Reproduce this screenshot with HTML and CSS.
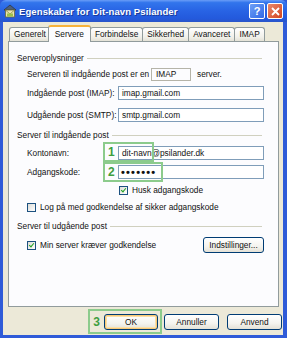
FILE: index.html
```html
<!DOCTYPE html>
<html lang="da">
<head>
    <meta charset="UTF-8">
    <title>Egenskaber for Dit-navn Psilander</title>
    <link rel="stylesheet" href="styles.css">
</head>
<body>
<div class="window">
    <div class="titlebar">
        <svg class="app-icon" width="14" height="14" viewBox="0 0 14 14">
            <path d="M1 6 L7 1 L13 6 Z" fill="#4d5f7a" stroke="#2b3646" stroke-width="0.8"/>
            <rect x="2.5" y="6" width="9" height="7" fill="#e8e4b0" stroke="#6b6a3a" stroke-width="0.8"/>
            <path d="M2.5 6 L7 10 L11.5 6" fill="none" stroke="#8a8840" stroke-width="0.8"/>
            <rect x="4" y="9.5" width="6" height="3" fill="#9cc04a"/>
        </svg>
        <span class="title">Egenskaber for Dit-navn Psilander</span>
        <span class="tb-btn help">?</span>
        <span class="tb-btn close">
            <svg width="9" height="9" viewBox="0 0 9 9"><path d="M1 1 L8 8 M8 1 L1 8" stroke="#fff" stroke-width="1.8"/></svg>
        </span>
    </div>
    <div class="frame">
        <div class="tabs">
            <span class="tab">Generelt</span>
            <span class="tab active">Servere</span>
            <span class="tab">Forbindelse</span>
            <span class="tab">Sikkerhed</span>
            <span class="tab">Avanceret</span>
            <span class="tab">IMAP</span>
        </div>
        <div class="panel">
            <div class="group-title">Serveroplysninger</div>
            <div class="row first">
                <span class="intro">Serveren til indgående post er en</span>
                <span class="readonly">IMAP</span>
                <span class="after">server.</span>
            </div>
            <div class="row r-gap5">
                <label class="lbl">Indgående post (IMAP):</label>
                <span class="field">imap.gmail.com</span>
            </div>
            <div class="row r-gap8">
                <label class="lbl">Udgående post (SMTP):</label>
                <span class="field">smtp.gmail.com</span>
            </div>

            <div class="group-title g2">Server til indgående post</div>
            <div class="row r-gap6">
                <label class="lbl">Kontonavn:</label>
                <span class="field">dit-navn@psilander.dk</span>
                <span class="mark mark1"><b>1</b></span>
            </div>
            <div class="row r-gap5">
                <label class="lbl">Adgangskode:</label>
                <span class="field dots">•••••••</span>
                <span class="mark mark2"><b>2</b></span>
            </div>
            <div class="row check-row husk">
                <span class="cb checked"></span>
                <span>Husk adgangskode</span>
            </div>
            <div class="row check-row log">
                <span class="cb"></span>
                <span>Log på med godkendelse af sikker adgangskode</span>
            </div>

            <div class="group-title g3">Server til udgående post</div>
            <div class="row tall">
                <span class="cb checked"></span>
                <span class="cb-text">Min server kræver godkendelse</span>
                <button class="btn settings">Indstillinger...</button>
            </div>
        </div>
        <div class="buttons">
            <div class="mark3">
                <b>3</b>
                <button class="btn default">OK</button>
            </div>
            <button class="btn">Annuller</button>
            <button class="btn">Anvend</button>
        </div>
    </div>
</div>
</body>
</html>
```

FILE: styles.css
```css
body {
    margin: 0;
    font-family: "Liberation Sans", Arial, sans-serif;
    font-size: 8.3px;
    color: #111;
}
.window {
    width: 287px;
    height: 338px;
    display: flex;
    flex-direction: column;
    background: #2f5bd8;
}
.titlebar {
    height: 22px;
    display: flex;
    align-items: center;
    padding: 0 3px 0 3px;
    box-sizing: border-box;
    background: linear-gradient(#6a9df7 0%, #3275ec 12%, #2863e4 50%, #2359dc 85%, #2a55c8 100%);
    border-radius: 6px 6px 0 0;
}
.app-icon {
    flex: 0 0 14px;
}
.title {
    margin-left: 2px;
    color: #fff;
    font-weight: bold;
    font-size: 9.5px;
    letter-spacing: 0.1px;
    text-shadow: 1px 1px 0 #1a3b9a;
    flex: 1;
}
.tb-btn {
    width: 16px;
    height: 16px;
    box-sizing: border-box;
    border: 1px solid #fff;
    border-radius: 2px;
    display: flex;
    align-items: center;
    justify-content: center;
    color: #fff;
    font-weight: bold;
    font-size: 11px;
}
.help {
    background: linear-gradient(135deg, #6fa0f6, #2f68e6);
    margin-right: 2px;
}
.close {
    background: linear-gradient(135deg, #e98a6c, #d2441f);
    margin-right: 1px;
}
.frame {
    flex: 1;
    background: #ece9d8;
    margin: 0 4px 3px 3px;
    padding: 3px 0 0 1px;
    display: flex;
    flex-direction: column;
}
.tabs {
    display: flex;
    align-items: flex-end;
    height: 16px;
    padding-left: 5px;
    position: relative;
    z-index: 1;
}
.tab {
    height: 14px;
    box-sizing: border-box;
    padding: 0 4px;
    line-height: 13px;
    border: 1px solid #919b9c;
    border-bottom: none;
    border-radius: 3px 3px 0 0;
    background: linear-gradient(#fff, #f1f0ea 70%, #e4e2d6);
    margin-right: -1px;
}
.tab.active {
    height: 17px;
    margin: 0 -1px 0 -2px;
    padding: 0 6px;
    line-height: 15px;
    background: #fcfcfe;
    border-top: 2px solid #f7b23b;
    position: relative;
    top: 1px;
}
.panel {
    height: 266px;
    box-sizing: border-box;
    margin: 0 0 0 4px;
    width: 271px;
    border: 1px solid #919b9c;
    background: #fcfcfe;
    padding: 11px 14px 0 8px;
}
.group-title {
    height: 10px;
    line-height: 10px;
    display: flex;
    align-items: center;
    margin-right: 2px;
}
.group-title::after {
    content: "";
    flex: 1;
    height: 1px;
    background: #d0d0bf;
    margin-left: 3px;
}
.g2 {
    margin-top: 8px;
}
.g3 {
    margin-top: 9px;
}
.row {
    display: flex;
    align-items: center;
    height: 14px;
    padding-left: 10px;
    position: relative;
}
.first {
    margin-top: 4px;
}
.r-gap5 {
    margin-top: 5px;
}
.r-gap6 {
    margin-top: 6px;
}
.r-gap8 {
    margin-top: 8px;
}
.intro {
    width: 124px;
}
.readonly {
    width: 40px;
    height: 13px;
    box-sizing: border-box;
    border: 1px solid #b5b4a8;
    padding-left: 4px;
    line-height: 11px;
}
.after {
    margin-left: 6px;
}
.lbl {
    width: 91px;
}
.field {
    width: 146px;
    height: 14px;
    box-sizing: border-box;
    border: 1px solid #7f9db9;
    background: #fff;
    padding-left: 3px;
    line-height: 12px;
}
.dots {
    font-size: 11px;
    font-weight: bold;
    letter-spacing: 1.2px;
    padding-left: 2px;
}
.mark {
    position: absolute;
    left: 86px;
    height: 20px;
    box-sizing: border-box;
    border: 2px solid #8ccb8c;
    color: #3e9e3e;
    font-size: 12px;
    line-height: 16px;
    padding-left: 3px;
}
.mark b, .mark3 b {
    font-weight: bold;
}
.mark1 {
    top: -4px;
    width: 51px;
}
.mark2 {
    top: -3px;
    width: 60px;
}
.check-row {
    height: 10px;
}
.husk {
    margin-top: 6px;
    padding-left: 102px;
}
.log {
    margin-top: 7px;
}
.cb {
    width: 9px;
    height: 9px;
    box-sizing: border-box;
    border: 1px solid #1c5180;
    background: linear-gradient(135deg, #dcdcd7, #fff);
    margin-right: 4px;
    position: relative;
}
.cb.checked::after {
    content: "";
    position: absolute;
    left: 2px;
    top: 0;
    width: 2px;
    height: 4px;
    border: solid #21a121;
    border-width: 0 1.5px 1.5px 0;
    transform: rotate(40deg);
}
.tall {
    height: 16px;
    margin-top: 6px;
}
.cb-text {
    flex: 1;
}
.btn {
    font-family: inherit;
    font-size: 8.3px;
    color: #111;
    height: 16px;
    padding: 0;
    box-sizing: border-box;
    border: 1px solid #003c74;
    border-radius: 3px;
    background: linear-gradient(#fff, #f4f3ee 60%, #e4e1d6);
}
.settings {
    width: 61px;
}
.buttons {
    display: flex;
    justify-content: flex-end;
    align-items: center;
    margin-top: 2px;
    padding-right: 1px;
}
.buttons .btn {
    width: 55px;
    margin-left: 2px;
}
.buttons .btn + .btn {
    margin-left: 8px;
}
.mark3 {
    display: flex;
    align-items: center;
    height: 25px;
    box-sizing: border-box;
    border: 2px solid #8ccb8c;
    padding: 0 2px 0 3px;
    color: #3e9e3e;
    font-size: 12px;
}
.mark3 .btn {
    width: 54px;
    margin-left: 4px;
}
.btn.default {
    box-shadow: inset 0 0 0 1px #f8c878, inset 0 0 0 2px #fbe0a8;
}
```
